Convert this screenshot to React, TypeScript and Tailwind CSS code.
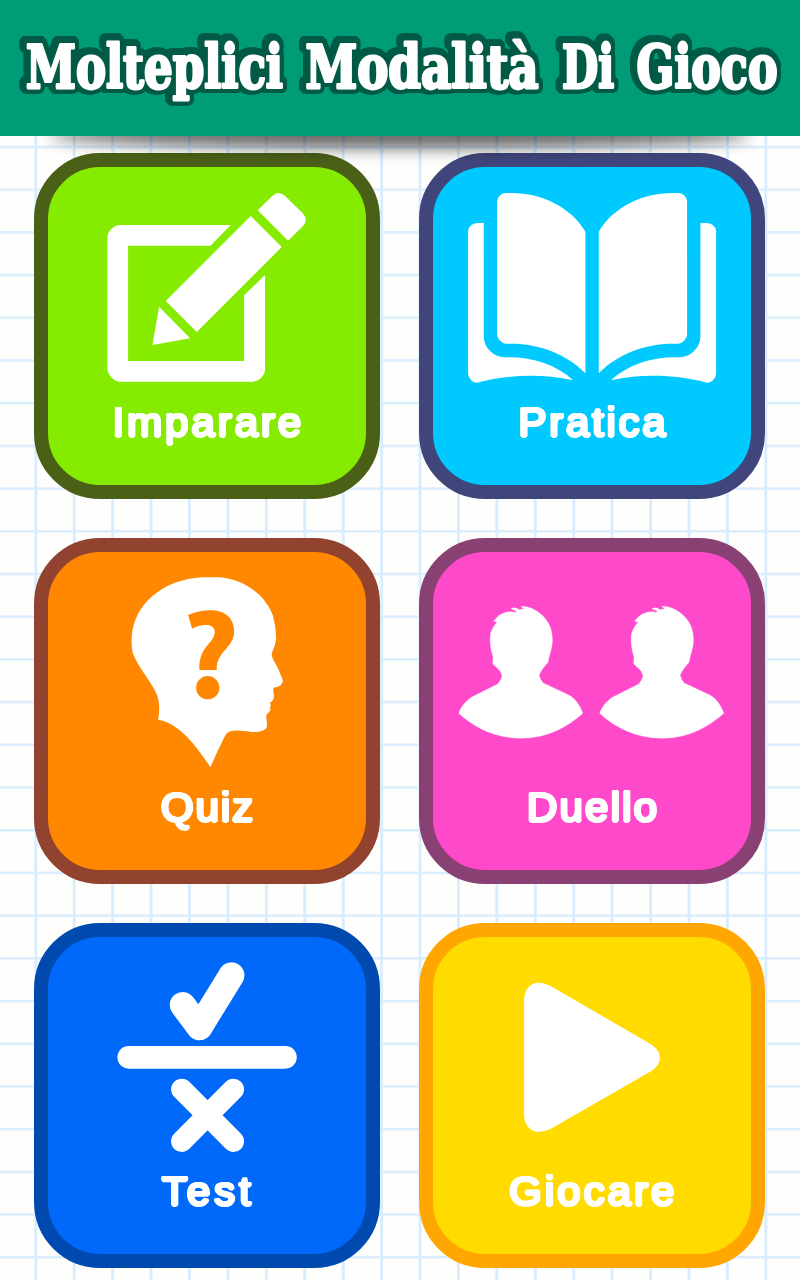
import type { ReactNode } from "react";

type Mode = {
  label: string;
  card: string;
  text: string;
  icon: ReactNode;
};

const titleWords = [
  { word: "Molteplici", x: 26, width: 257 },
  { word: "Modalità", x: 305.5, width: 233 },
  { word: "Di", x: 562, width: 52 },
  { word: "Gioco", x: 636.5, width: 141 },
];

function EditIcon() {
  return (
    <g fill="#fff">
      <path d="M602 225H271Q256 225 244 237T232 262V657Q233 671 245 683T271 695H668Q682 695 693 684T705 658V375L642 436V633H294V287H541Z" />
      <path d="M662 198L755 291L500 546L407 453Z" />
      <path d="M683 181L726 139Q736 129 745 129T765 138L818 190Q827 200 827 210T818 229L774 272Z" />
      <path d="M387 470L480 565L367 585Z" />
    </g>
  );
}

function BookIcon() {
  const half = (
    <>
      <path d="M246 154Q247 143 255 136T272 129H290C380 129 468 172 511 245V670C456 612 370 581 290 581H272Q263 580 255 572T246 556Z" />
      <path d="M206 219H190Q176 219 168 226T159 243V673Q160 683 168 691T186 698C275 675 375 669 474 691C425 645 355 622 283 622H268Q243 621 225 603T206 560Z" />
    </>
  );
  return (
    <g fill="#fff">
      {half}
      <g transform="translate(1062 0) scale(-1 1)">{half}</g>
    </g>
  );
}

function HeadIcon() {
  return (
    <g>
      <path
        fill="#fff"
        d="M516 127H565C640 132 706 178 729 243Q738 278 738 312C735 338 725 347 725 361C728 376 737 386 743 399L758 434Q760 443 752 451Q744 457 731 458Q728 464 731 475Q733 487 729 494Q727 500 719 502Q724 509 720 517L721 525Q717 533 710 538C706 550 713 564 710 577C703 589 683 592 666 591C642 588 623 584 604 588Q590 592 585 602Q562 647 541 697C511 650 450 562 384 554C390 525 389 494 375 467C355 429 325 397 308 355Q303 330 305 305C311 207 400 133 516 127Z"
      />
      <path
        fill="#ff8800"
        d="M474 240C527 217 605 215 612 282C617 339 558 345 560 405H508C505 331 552 329 554 290C552 261 510 268 486 281Z"
      />
      <circle cx="533" cy="458" r="35" fill="#ff8800" />
    </g>
  );
}

function PeopleIcon() {
  const person = (
    <path d="M236 259C248 239 269 229 292 230Q299 235 305 229L288 221Q298 214 313 224L326 221L317 214C341 214 359 223 374 235C401 256 413 283 412 320C411 341 403 356 399 382C389 393 378 405 372 421Q375 434 384 444L459 479C482 490 496 514 503 535C454 578 398 609 318 610C239 609 177 578 131 535C137 517 149 501 169 487L248 447Q257 437 261 424C258 402 241 397 233 386L234 366C226 342 223 312 227 293Q232 277 246 261Z" />
  );
  return (
    <g fill="#fff" stroke="#fff" strokeWidth="1" strokeLinejoin="round">
      {person}
      <g transform="translate(423 0)">{person}</g>
    </g>
  );
}

function TestIcon() {
  return (
    <g fill="none" stroke="#fff" strokeLinecap="round" strokeLinejoin="round">
      <path strokeWidth="78" d="M458 255L508 322L604 166" />
      <path strokeWidth="68" d="M296 412H766" />
      <path strokeWidth="64" d="M455 508L610 664M610 508L455 664" />
    </g>
  );
}

function PlayIcon() {
  return (
    <path
      fill="#fff"
      d="M327 238Q328 216 340 202T369 188Q387 188 405 197L710 374Q735 392 735 413T710 452L405 628Q387 636 369 636Q352 635 340 622T327 588Z"
    />
  );
}

const modes: Mode[] = [
  { label: "Imparare", card: "bg-[#85eb00] border-[#4b6017]", text: "tracking-[2.8px]", icon: <EditIcon /> },
  { label: "Pratica", card: "bg-[#00c9ff] border-[#40467c]", text: "tracking-[2.6px]", icon: <BookIcon /> },
  { label: "Quiz", card: "bg-[#ff8800] border-[#914330]", text: "tracking-[1.9px]", icon: <HeadIcon /> },
  { label: "Duello", card: "bg-[#ff49cb] border-[#894073]", text: "tracking-[2.1px]", icon: <PeopleIcon /> },
  { label: "Test", card: "bg-[#0069fa] border-[#004aaf]", text: "tracking-[3.8px]", icon: <TestIcon /> },
  { label: "Giocare", card: "bg-[#ffdb00] border-[#ffa700]", text: "tracking-[2.9px]", icon: <PlayIcon /> },
];

function ModeCard({ mode }: { mode: Mode }) {
  return (
    <button
      type="button"
      className={`flex size-[345.5px] flex-col items-center overflow-hidden rounded-[66px] border-[14px] ${mode.card}`}
    >
      <svg viewBox="54 51 952 660" className="block h-[220px] w-full shrink-0" aria-hidden="true">
        {mode.icon}
      </svg>
      <span
        className={`mt-[10.5px] scale-x-105 whitespace-nowrap pl-[3px] font-['Liberation_Sans',Arial,sans-serif] text-[40px] leading-[48px] text-white [text-shadow:1.5px_0_#fff,-1.5px_0_#fff,0_1.5px_#fff,0_-1.5px_#fff,1.1px_1.1px_#fff,-1.1px_1.1px_#fff,1.1px_-1.1px_#fff,-1.1px_-1.1px_#fff] ${mode.text}`}
      >
        {mode.label}
      </span>
    </button>
  );
}

export default function App() {
  return (
    <div className="flex h-[1280px] w-[800px] flex-col overflow-hidden bg-[#fefefd] bg-[linear-gradient(90deg,#d9edff_0,#d9edff_2.6px,transparent_3.2px),linear-gradient(180deg,#d9edff_0,#d9edff_2.2px,transparent_2.8px)] bg-[size:38.43px_100%,100%_42.71px] bg-[position:-4.1px_0,0_17.6px]">
      <header className="relative h-[136px] shrink-0 bg-[#009b77]">
        <h1 className="h-full">
          <svg viewBox="0 0 800 136" className="block h-full w-full">
            <g
              className="font-['DejaVu_Serif',serif] text-[59px] font-bold [font-stretch:condensed] [filter:drop-shadow(2.1px_0_0_#005a45)_drop-shadow(-2.1px_0_0_#005a45)_drop-shadow(0_2.1px_0_#005a45)_drop-shadow(0_-2.1px_0_#005a45)_drop-shadow(1.5px_1.5px_0_#005a45)_drop-shadow(-1.5px_-1.5px_0_#005a45)_drop-shadow(1.5px_-1.5px_0_#005a45)_drop-shadow(-1.5px_1.5px_0_#005a45)]"
              fill="#fff"
              stroke="#fff"
              strokeWidth="2.8"
              strokeLinejoin="round"
            >
              {titleWords.map((w) => (
                <text key={w.word} x={w.x} y="87.7" textLength={w.width} lengthAdjust="spacingAndGlyphs">
                  {w.word}
                </text>
              ))}
            </g>
          </svg>
        </h1>
        <div className="pointer-events-none absolute inset-x-0 top-full h-[50px] overflow-hidden">
          <div className="mx-auto -mt-[15px] h-[27px] w-[700px] rounded-[50%] bg-black/60 blur-[8px]" />
        </div>
      </header>
      <main className="grid grid-cols-[345.5px_345.5px] gap-x-[39.5px] gap-y-[39.2px] pl-[34px] pt-[17.4px]">
        {modes.map((mode) => (
          <ModeCard key={mode.label} mode={mode} />
        ))}
      </main>
    </div>
  );
}
